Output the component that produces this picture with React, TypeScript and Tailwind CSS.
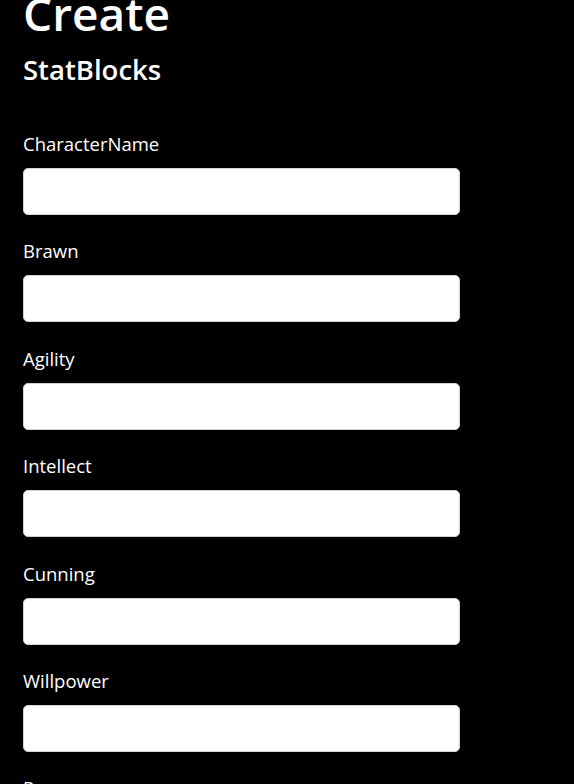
const fields = ["CharacterName", "Brawn", "Agility", "Intellect", "Cunning", "Willpower", "Presence"]

const App = () => {
  return (
    <div className="min-h-screen bg-black text-white font-['Open_Sans',sans-serif] px-[23px] overflow-hidden">
      {/* Title */}
      <h1 className="text-[46px] font-semibold leading-none -mt-[10px] mb-[17px]">Create</h1>
      <h4 className="text-[27.5px] font-semibold leading-[34px] mb-[43px]">StatBlocks</h4>

      {/* Form */}
      <form className="w-[437px]">
        {fields.map((f) => (
          <div key={f} className="mb-[22.4px]">
            <label className="block text-[18.5px] leading-[28px] mb-[10px]">{f}</label>
            <input
              type="text"
              className="block w-full h-[47px] bg-white border border-[#ced4da] rounded-[5px] px-3 text-black"
            />
          </div>
        ))}
      </form>
    </div>
  )
}

export default App
